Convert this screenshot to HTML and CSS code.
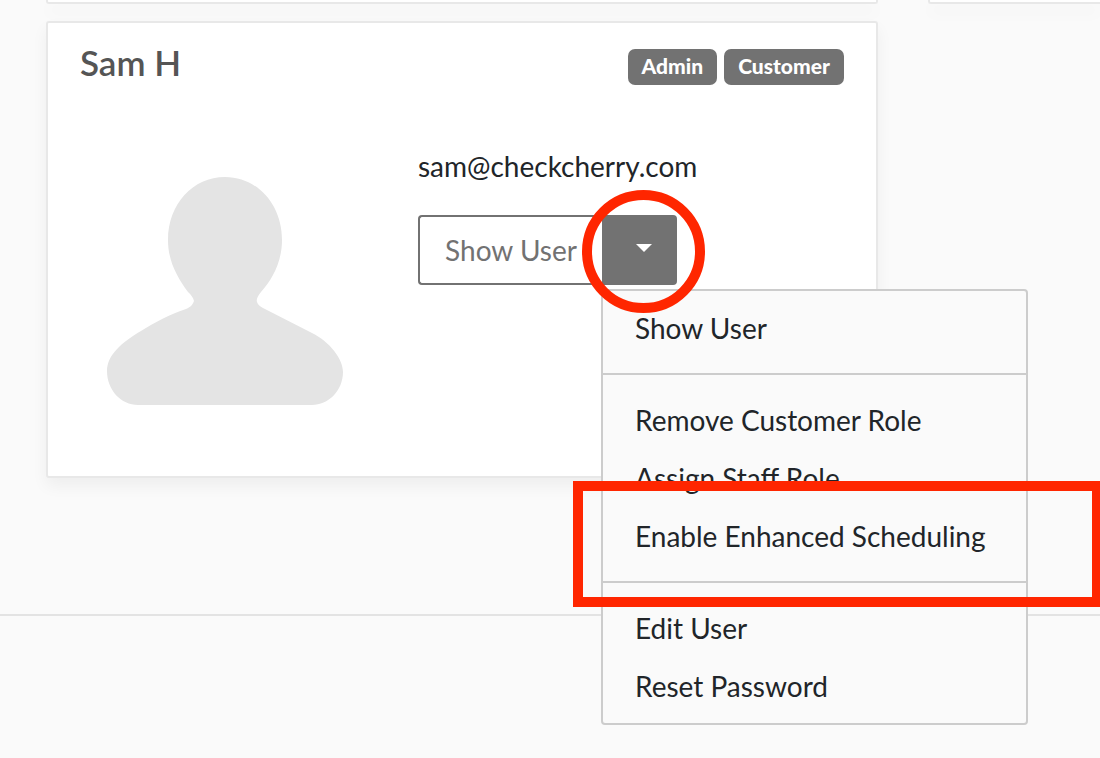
FILE: index.html
```
<!DOCTYPE html>
<html lang="en">
<head>
    <meta charset="UTF-8">
    <title>Users</title>
    <link rel="stylesheet" href="styles.css">
</head>
<body>
    <main class="users">
        <div class="card card-end"></div>
        <div class="card card-end card-side"></div>
        <section class="card user">
            <header class="user-head">
                <h2>Sam H</h2>
                <div class="badges">
                    <span class="badge">Admin</span>
                    <span class="badge">Customer</span>
                </div>
            </header>
            <div class="user-body">
                <svg class="avatar" viewBox="0 0 236 228" aria-hidden="true">
                    <path d="M118 0C150 0 175 27 175 63C175 85 165 103 154 115C151 119 149 122 150 125C151 128 153 129 156 131L205 156C223 165 236 182 236 195C236 214 221 228 205 228H31C14 228 0 213 0 194C0 178 15 165 34 154C48 145 64 137 79 132C84 130 86 127 87 124C86 120 84 118 81 115C70 100 61 84 61 63C61 27 86 0 118 0Z"/>
                </svg>
                <div class="user-info">
                    <p class="email">sam@checkcherry.com</p>
                    <div class="btn-group">
                        <button type="button" class="btn">Show User</button>
                        <button type="button" class="btn btn-toggle" aria-label="More actions"><span class="caret"></span></button>
                        <span class="mark mark-circle"></span>
                        <ul class="menu">
                            <li><a href="#">Show User</a></li>
                            <li class="divider"></li>
                            <li><a href="#">Remove Customer Role</a></li>
                            <li><a href="#">Assign Staff Role</a></li>
                            <li class="marked"><a href="#">Enable Enhanced Scheduling</a><span class="mark mark-box"></span></li>
                            <li class="divider"></li>
                            <li><a href="#">Edit User</a></li>
                            <li><a href="#">Reset Password</a></li>
                        </ul>
                    </div>
                </div>
            </div>
        </section>
    </main>
    <footer class="footer"></footer>
</body>
</html>
```
FILE: styles.css
```
*{
    box-sizing: border-box;
}
body{
    margin: 0;
    overflow: hidden;
    background: #fafafa;
    color: #212529;
    font-family: Lato, "Liberation Sans", sans-serif;
    font-size: 28px;
    line-height: 42px;
}
.users{
    display: grid;
    grid-template-columns: 29fr 6fr;
    column-gap: 50px;
    row-gap: 17px;
    padding: 0 0 136px 46px;
}
.card{
    background: #fff;
    border: 2px solid #e8e8e8;
    border-radius: 3px;
    box-shadow: 0 8px 16px rgba(0,0,0,.05);
}
/* end of the previous row */
.card-end{
    height: 4px;
    border-top: 0;
    border-radius: 0 0 3px 3px;
}
.card-side{
    border-right: 0;
    border-radius: 0 0 0 3px;
}
.user{
    padding: 26px 32px 71px;
}
.user-head{
    display: flex;
    justify-content: space-between;
    align-items: flex-start;
}
.user-head h2{
    margin: 0;
    color: #555;
    font-size: 35px;
    font-weight: 600;
    line-height: 26px;
}
.badges{
    display: flex;
    gap: 7px;
}
.badge{
    padding: 0 14px 2px;
    border-radius: 7px;
    background: #727272;
    color: #fff;
    font-size: 21px;
    font-weight: 900;
    line-height: 34px;
}
.user-body{
    display: flex;
    gap: 75px;
    padding: 60px 0 0 27px;
}
.avatar{
    width: 236px;
    height: 228px;
    margin-top: 32px;
    fill: #e4e4e4;
}
.email{
    margin: 0 0 28px;
}
.btn-group{
    position: relative;
    display: flex;
    width: 259px;
}
.btn{
    flex: 1;
    height: 70px;
    padding: 0;
    border: 2px solid #727272;
    border-right: 0;
    border-radius: 4px 0 0 4px;
    background: #fff;
    color: #727272;
    font: inherit;
}
.btn-toggle{
    display: flex;
    flex: 0 0 75px;
    align-items: center;
    justify-content: center;
    border: 0;
    border-radius: 0 4px 4px 0;
    background: #727272;
}
.caret{
    margin: 0 0 4px 8px;
    border: 8px solid transparent;
    border-top-color: #fff;
    border-bottom: 0;
}
.menu{
    position: absolute;
    top: 74px;
    left: 183px;
    width: 427px;
    margin: 0;
    padding: 8px 0;
    border: 2px solid #ccc;
    border-radius: 4px;
    background: #fafafa;
    list-style: none;
}
.menu a{
    display: block;
    padding: 8px 32px;
    color: #212529;
    text-decoration: none;
    white-space: nowrap;
}
.divider{
    height: 2px;
    margin: 16px 0;
    background: #ccc;
}
/* red highlights */
.mark{
    position: absolute;
    z-index: 1;
    border: 10px solid #ff2600;
    pointer-events: none;
}
.mark-circle{
    top: -25px;
    right: -28px;
    width: 123px;
    height: 123px;
    border-radius: 50%;
}
.marked{
    position: relative;
}
.mark-box{
    top: -26px;
    left: -30px;
    width: 529px;
    height: 126px;
}
.footer{
    height: 144px;
    border-top: 2px solid #e3e3e3;
}
```
